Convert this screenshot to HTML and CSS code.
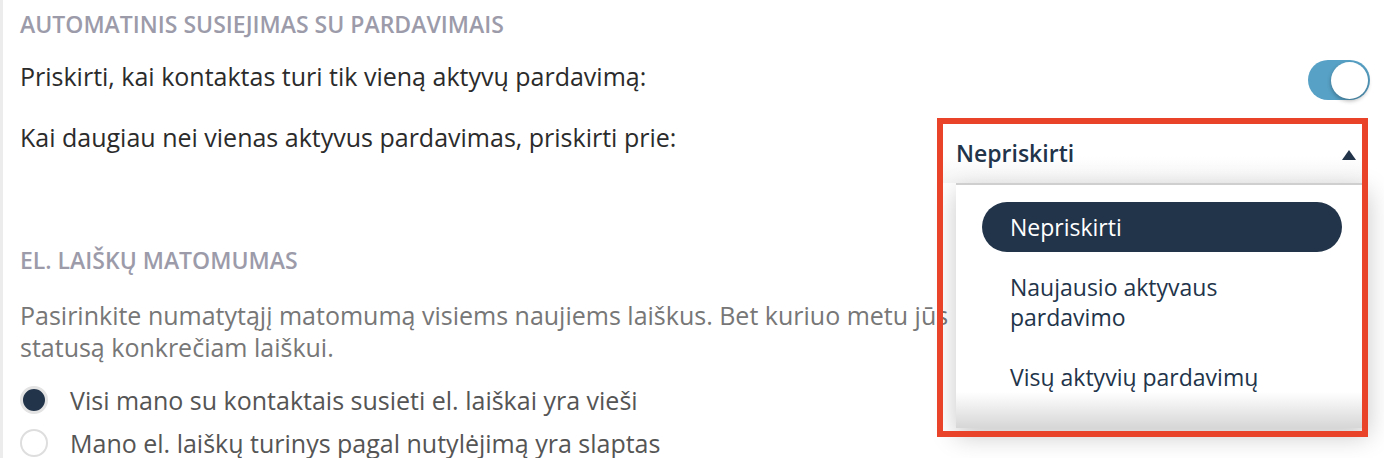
FILE: index.html
```html
<!DOCTYPE html>
<html lang="lt">
<head>
<meta charset="utf-8">
<link rel="stylesheet" href="styles.css">
</head>
<body>
<div class="page">
  <section class="group">
    <h3 class="group-title">AUTOMATINIS SUSIEJIMAS SU PARDAVIMAIS</h3>
    <div class="row row-toggle">
      <span class="label">Priskirti, kai kontaktas turi tik vieną aktyvų pardavimą:</span>
      <span class="toggle"><span class="knob"></span></span>
    </div>
    <div class="row row-select">
      <span class="label">Kai daugiau nei vienas aktyvus pardavimas, priskirti prie:</span>
      <div class="select">
        <div class="trigger">
          <span class="trigger-text">Nepriskirti</span>
          <svg class="caret" width="14" height="10" viewBox="0 0 14 10"><polygon points="7,0 14,10 0,10"/></svg>
        </div>
        <ul class="menu">
          <li class="option active">Nepriskirti</li>
          <li class="option">Naujausio aktyvaus pardavimo</li>
          <li class="option">Visų aktyvių pardavimų</li>
        </ul>
        <div class="highlight"></div>
      </div>
    </div>
  </section>
  <section class="group group-second">
    <h3 class="group-title">EL. LAIŠKŲ MATOMUMAS</h3>
    <p class="desc">Pasirinkite numatytąjį matomumą visiems naujiems laiškus. Bet kuriuo metu jūs<br>statusą konkrečiam laiškui.</p>
    <ul class="radios">
      <li class="radio checked"><span class="dot"></span><span class="radio-label">Visi mano su kontaktais susieti el. laiškai yra vieši</span></li>
      <li class="radio"><span class="dot"></span><span class="radio-label">Mano el. laiškų turinys pagal nutylėjimą yra slaptas</span></li>
    </ul>
  </section>
</div>
</body>
</html>
```
FILE: styles.css
```css
* { box-sizing: border-box; }
html, body { margin: 0; padding: 0; background: #fff; }
body {
  font-family: "Open Sans", "Noto Sans", sans-serif;
  overflow: hidden;
  height: 458px;
}
.page {
  border-left: 3px solid #ececec;
  padding: 9px 14px 0 17px;
  height: 458px;
}
.group-title {
  margin: 0;
  font-size: 23px;
  line-height: 30px;
  font-weight: 600;
  color: #9c9baa;
}
.row {
  display: flex;
  justify-content: space-between;
  align-items: flex-start;
}
.row-toggle {
  margin-top: 19px;
}
.label {
  font-size: 25px;
  line-height: 36px;
  color: #2b2b2b;
}
.toggle {
  width: 62px;
  height: 40px;
  margin-top: 2px;
  border-radius: 20px;
  background: #57a1c6;
  display: flex;
  justify-content: flex-end;
  align-items: center;
  padding: 0 2px;
}
.knob {
  width: 37px;
  height: 37px;
  border-radius: 50%;
  background: #fff;
  box-shadow: 0 2px 4px rgba(0,0,0,0.3);
}
.row-select {
  margin-top: 19px;
}
.select {
  position: relative;
  width: 423px;
  margin-top: 4px;
  margin-right: 4px;
}
.trigger {
  height: 60px;
  display: flex;
  align-items: center;
  justify-content: space-between;
  padding: 0 10px 0 13px;
  background: linear-gradient(#fff 55%, #f5f5f5);
}
.trigger-text {
  font-size: 23px;
  font-weight: 600;
  color: #22344a;
}
.caret { fill: #22344a; margin-top: 4px; }
.menu {
  position: absolute;
  top: 60px;
  left: 13px;
  width: 412px;
  height: 245px;
  margin: 0;
  padding: 17px 26px 0;
  list-style: none;
  background: #fff;
  border-top: 2px solid #cfcfcf;
  box-shadow: 0 8px 24px rgba(0,0,0,0.22);
  overflow: hidden;
}
.menu::after {
  content: "";
  position: absolute;
  left: 0;
  right: 0;
  bottom: 0;
  height: 36px;
  background: linear-gradient(rgba(0,0,0,0), rgba(0,0,0,0.16));
}
.option {
  font-size: 23px;
  line-height: 30px;
  color: #22344a;
  padding: 10px 28px;
  border-radius: 25px;
  margin-bottom: 10px;
}
.option.active {
  background: #22344a;
  color: #fff;
}
.highlight {
  position: absolute;
  top: -5px;
  left: -6px;
  width: 431px;
  height: 319px;
  border: 6px solid #e9432a;
  pointer-events: none;
}
.group-second .group-title { margin-top: 62px; }
.desc {
  margin: 24px 0 0;
  font-size: 25px;
  line-height: 32px;
  color: #777;
}
.radios {
  list-style: none;
  margin: 15px 0 0;
  padding: 0;
}
.radio {
  display: flex;
  align-items: center;
  height: 43px;
}
.dot {
  width: 28px;
  height: 28px;
  border-radius: 50%;
  border: 2px solid #dedede;
  background: #fff;
  margin-right: 22px;
  flex: none;
}
.radio.checked .dot {
  border: 3px solid #e3e3e3;
  background: #22344a;
}
.radio-label {
  font-size: 25px;
  line-height: 36px;
  color: #555;
}
```
